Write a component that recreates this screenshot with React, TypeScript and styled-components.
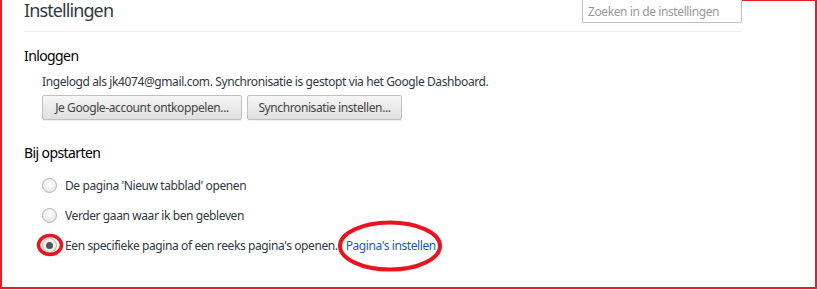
import React from "react";
import styled, { createGlobalStyle } from "styled-components";

const GlobalStyle = createGlobalStyle`
  html, body {
    margin: 0;
    padding: 0;
    background: #fff;
  }
  body {
    font-family: "Segoe UI", "Noto Sans", "Liberation Sans", sans-serif;
    color: #303942;
    letter-spacing: -0.4px;
  }
`;

const Page = styled.div`
  position: relative;
  width: 818px;
  height: 290px;
  overflow: hidden;
  background: #fff;
`;

// red annotation rectangle painted over the screenshot
const Frame = styled.div`
  position: absolute;
  inset: 0 1px 1px 0;
  border-left: 2px solid #ee1c25;
  border-right: 2px solid #ee1c25;
  border-bottom: 2px solid #ee1c25;
  pointer-events: none;
`;

const FrameTop = styled.div`
  position: absolute;
  top: 0;
  left: 742px;
  right: 1px;
  height: 1px;
  background: #ee1c25;
`;

const Content = styled.div`
  padding-left: 24px;
  width: 718px;
`;

const Header = styled.header`
  display: flex;
  justify-content: space-between;
  align-items: flex-start;
  height: 31px;
  border-bottom: 1px solid #eeeeee;
`;

const Title = styled.h1`
  margin: 0;
  font-size: 18px;
  font-weight: 400;
  letter-spacing: -0.9px;
  color: #303942;
  line-height: 20px;
`;

const Search = styled.input`
  box-sizing: border-box;
  width: 160px;
  height: 24px;
  margin-top: -1px;
  padding: 0 5px;
  border: 1px solid #bfbfbf;
  border-radius: 2px;
  font-family: inherit;
  font-size: 12px;
  letter-spacing: -0.4px;
  outline: none;
  &::placeholder {
    color: #999;
  }
`;

const Section = styled.section`
  padding-top: 14px;
`;

const SectionTitle = styled.h3`
  margin: 0;
  font-size: 14px;
  font-weight: 400;
  letter-spacing: -0.6px;
  color: #000;
  line-height: 20px;
`;

const SectionBody = styled.div`
  padding-left: 18px;
`;

const Note = styled.div`
  margin-top: 8px;
  font-size: 12px;
  line-height: 16px;
  color: #303942;
`;

const ButtonRow = styled.div`
  display: flex;
  gap: 5px;
  margin-top: 5px;
`;

const Button = styled.button<{ $width: number }>`
  box-sizing: border-box;
  width: ${(p) => p.$width}px;
  height: 25px;
  padding: 0;
  white-space: nowrap;
  border: 1px solid #c0c0c0;
  border-radius: 2px;
  background: linear-gradient(#f7f7f7, #ececec 40%, #e0e0e0);
  box-shadow: 0 1px 0 rgba(0, 0, 0, 0.06);
  font-family: inherit;
  font-size: 12px;
  letter-spacing: -0.4px;
  color: #444;
`;

const StartSection = styled(Section)`
  padding-top: 23px;
`;

const RadioList = styled.div`
  display: flex;
  flex-direction: column;
  gap: 14px;
  margin-top: 14px;
  padding-left: 18px;
`;

const RadioRow = styled.label`
  display: flex;
  align-items: center;
  gap: 8px;
  height: 16px;
  font-size: 12px;
  white-space: pre;
  color: #303942;
`;

const RadioDot = styled.span<{ $checked?: boolean }>`
  position: relative;
  box-sizing: border-box;
  width: 15px;
  height: 15px;
  border-radius: 50%;
  border: 1px solid #b4b4b4;
  background: radial-gradient(circle at 50% 35%, #ffffff, #ededed 60%, #d8d8d8);
  flex: none;
  &::after {
    content: "";
    display: ${(p) => (p.$checked ? "block" : "none")};
    position: absolute;
    left: 3px;
    top: 3px;
    width: 7px;
    height: 7px;
    border-radius: 50%;
    background: #555;
  }
`;

const Marked = styled.span`
  position: relative;
  display: inline-flex;
`;

const Ring = styled.svg`
  position: absolute;
  overflow: visible;
  pointer-events: none;
`;

const Link = styled.a`
  color: #1e55cc;
  text-decoration: none;
`;

export default function App() {
  return (
    <Page>
      <GlobalStyle />
      <Content>
        <Header>
          <Title>Instellingen</Title>
          <Search placeholder="Zoeken in de instellingen" />
        </Header>

        <Section>
          <SectionTitle>Inloggen</SectionTitle>
          <SectionBody>
            <Note>
              Ingelogd als jk4074@gmail.com. Synchronisatie is gestopt via het Google Dashboard.
            </Note>
            <ButtonRow>
              <Button $width={200}>Je Google-account ontkoppelen...</Button>
              <Button $width={155}>Synchronisatie instellen...</Button>
            </ButtonRow>
          </SectionBody>
        </Section>

        <StartSection>
          <SectionTitle>Bij opstarten</SectionTitle>
          <RadioList>
            <RadioRow>
              <RadioDot />
              De pagina 'Nieuw tabblad' openen
            </RadioRow>
            <RadioRow>
              <RadioDot />
              Verder gaan waar ik ben gebleven
            </RadioRow>
            <RadioRow>
              <Marked>
                <RadioDot $checked />
                <Ring width="26" height="22" style={{ left: -5.5, top: -3.5 }}>
                  <ellipse cx="13" cy="11" rx="11.5" ry="9.5" fill="none" stroke="#e8141f" strokeWidth="3.5" />
                </Ring>
              </Marked>
              <span>Een specifieke pagina of een reeks pagina's openen.</span>
              <Marked>
                <Link href="#">Pagina's instellen</Link>
                <Ring width="106" height="52" style={{ left: -9, top: -17 }}>
                  <ellipse cx="53" cy="26" rx="50" ry="23.5" fill="none" stroke="#e8141f" strokeWidth="4" />
                </Ring>
              </Marked>
            </RadioRow>
          </RadioList>
        </StartSection>
      </Content>
      <Frame />
      <FrameTop />
    </Page>
  );
}
